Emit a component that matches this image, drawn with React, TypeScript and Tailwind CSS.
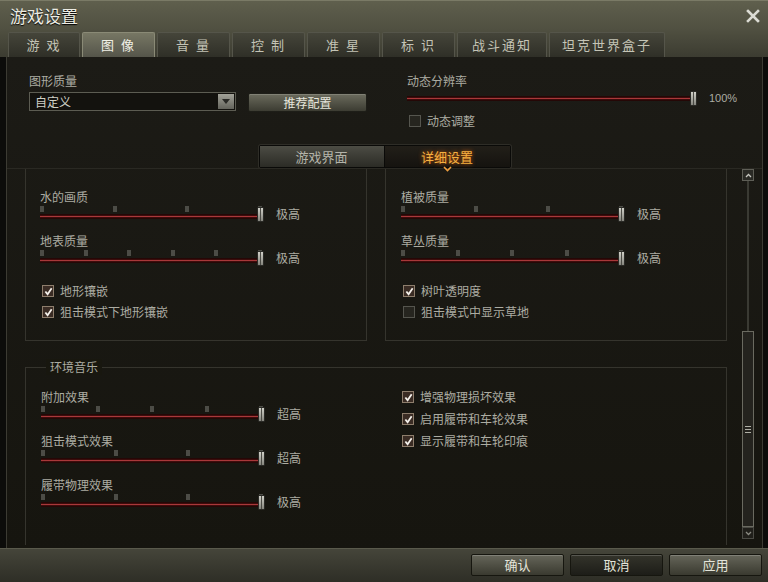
import React from 'react';

const tabs = [
  { label: '游 戏', w: 'w-[72px]' },
  { label: '图 像', w: 'w-[73px]', active: true },
  { label: '音 量', w: 'w-[73px]' },
  { label: '控 制', w: 'w-[73px]' },
  { label: '准 星', w: 'w-[73px]' },
  { label: '标 识', w: 'w-[73px]' },
  { label: '战斗通知', w: 'w-[90px]' },
  { label: '坦克世界盒子', w: 'w-[116px]' },
];

const Tab = ({ label, w, active }: { label: string; w: string; active?: boolean }) => (
  <div
    className={`${w} h-[25px] flex items-center justify-center border border-b-0 rounded-t-[2px] text-[13px] tracking-[2px] ${
      active
        ? 'bg-gradient-to-b from-[#777764] to-[#55554a] border-[#8a8a76] text-[#f0f0e6]'
        : 'bg-gradient-to-b from-[#45453a] to-[#2f2f27] border-[#55554a] text-[#c4c4b6]'
    }`}
  >
    {label}
  </div>
);

const Thumb = () => (
  <div className="absolute right-0 top-[2px] w-[7px] h-[15px] rounded-[1px] bg-gradient-to-b from-[#d0d0c8] to-[#86867e] border border-[#2a2a26] flex justify-center">
    <div className="w-[1px] h-full bg-[#4a4a44]" />
  </div>
);

const Track = () => (
  <div className="h-[5px] bg-[#3c0d0c] border-y border-[#250706] flex items-center">
    <div className="w-full h-[1px] bg-[#a8383a]" />
  </div>
);

const Slider = ({ label, ticks, value }: { label: string; ticks: number; value: string }) => (
  <div>
    <div className="h-4 text-[12px] leading-4 text-[#acaca2]">{label}</div>
    <div className="flex items-center">
      <div className="relative w-[224px] h-[18px]">
        <div className="flex justify-between pt-[1px] pr-[2px]">
          {Array.from({ length: ticks }).map((_, i) => (
            <span key={i} className="w-[4px] h-[6px] bg-[#4c4c46]" />
          ))}
        </div>
        <div className="mt-[2px] mr-[2px]">
          <Track />
        </div>
        <Thumb />
      </div>
      <span className="ml-[12px] text-[12px] text-[#acaca2]">{value}</span>
    </div>
  </div>
);

const Check = ({ label, checked }: { label: string; checked?: boolean }) => (
  <div className="h-4 flex items-center pl-[2px]">
    <span
      className={`w-[12px] h-[12px] flex items-center justify-center border ${
        checked ? 'border-[#8e7e6c] bg-[#3a2c24]' : 'border-[#55554e] bg-[#26251f]'
      }`}
    >
      {checked && (
        <svg width="9" height="9" viewBox="0 0 10 10">
          <polyline points="1.5,5 4,8 8.5,1.5" fill="none" stroke="#f4f0ea" strokeWidth="2" />
        </svg>
      )}
    </span>
    <span className="ml-[6px] text-[12px] text-[#acaca2]">{label}</span>
  </div>
);

const FooterButton = ({ label, dark }: { label: string; dark?: boolean }) => (
  <button
    className={`w-[93px] h-[22px] border border-[#16160f] rounded-[2px] text-[13px] text-[#e4e4da] shadow-[inset_0_1px_0_rgba(255,255,255,0.18)] ${
      dark ? 'bg-gradient-to-b from-[#34342b] to-[#1d1d18]' : 'bg-gradient-to-b from-[#66665a] to-[#3a3a30]'
    }`}
  >
    {label}
  </button>
);

export default function App() {
  return (
    <div className="w-[768px] h-[582px] bg-[#0c0c0a] flex flex-col overflow-hidden font-['Noto_Sans_CJK_SC','Noto_Sans',sans-serif]">
      {/* header + tabs */}
      <div className="h-[57px] bg-gradient-to-b from-[#5f5f4d] via-[#505041] to-[#3c3c31] border-t border-[#7a7a66] flex flex-col">
        <div className="h-[29px] flex items-center justify-between pl-[10px] pr-[8px]">
          <span className="text-[17px] text-[#ecece4] [text-shadow:0_1px_1px_#000]">游戏设置</span>
          <svg width="14" height="14" viewBox="0 0 14 14">
            <path d="M2 2 L12 12 M12 2 L2 12" stroke="#dcdcd4" strokeWidth="2.6" strokeLinecap="square" />
          </svg>
        </div>
        <div className="flex items-end gap-[2px] pl-[8px] h-[27px]">
          {tabs.map((t) => (
            <Tab key={t.label} {...t} />
          ))}
        </div>
      </div>

      {/* content */}
      <div className="ml-[6px] mr-[5px] h-[491px] bg-gradient-to-b from-[#1c1b16] to-[#16150f] border-x border-[#3c3b33] flex flex-col">
        {/* top settings */}
        <div className="h-[88px] flex pl-[22px] pt-[16px]">
          <div className="w-[378px]">
            <div className="h-4 text-[12px] leading-4 text-[#acaca2]">图形质量</div>
            <div className="flex items-center mt-[2px]">
              <div className="w-[207px] h-[19px] flex items-center justify-between border border-[#5c5c52] bg-[#13120e]">
                <span className="pl-[5px] text-[12px] text-[#d0d0c6]">自定义</span>
                <span className="w-[16px] h-[15px] mr-[1px] flex items-center justify-center bg-gradient-to-b from-[#a2a298] to-[#64645c]">
                  <svg width="8" height="5" viewBox="0 0 8 5">
                    <polygon points="0,0 8,0 4,5" fill="#2a2a26" />
                  </svg>
                </span>
              </div>
              <button className="ml-[12px] mt-[2px] w-[119px] h-[19px] border border-[#1e1e18] rounded-[2px] bg-gradient-to-b from-[#6c6c5e] to-[#3c3c32] text-[12px] font-normal text-[#e6e6dc] shadow-[inset_0_1px_0_rgba(255,255,255,0.15)]">
                推荐配置
              </button>
            </div>
          </div>
          <div>
            <div className="h-4 text-[12px] leading-4 text-[#acaca2]">动态分辨率</div>
            <div className="flex items-center">
              <div className="relative w-[290px] h-[18px]">
                <div className="pt-[7px] mr-[2px]">
                  <Track />
                </div>
                <Thumb />
              </div>
              <span className="ml-[12px] text-[11px] text-[#acaca2] font-['Liberation_Sans',sans-serif]">100%</span>
            </div>
            <div className="mt-[6px]">
              <Check label="动态调整" />
            </div>
          </div>
        </div>

        {/* view toggle */}
        <div className="h-[23px] flex justify-center">
          <div className="flex border border-[#0a0a08] rounded-[2px] shadow-[0_0_0_1px_#2e2d27]">
            <div className="w-[125px] flex items-center justify-center bg-gradient-to-b from-[#4c4c44] to-[#2c2c26] text-[13px] text-[#b4b4aa] border-r border-[#0a0a08]">
              游戏界面
            </div>
            <div className="relative w-[125px] flex items-center justify-center bg-gradient-to-b from-[#221f19] to-[#15130f] text-[13px] text-[#f5b040] [text-shadow:0_0_4px_#d9640f]">
              详细设置
              <svg className="absolute bottom-[-5px] left-[58px]" width="9" height="6" viewBox="0 0 9 6">
                <polyline points="1,1 4.5,4.5 8,1" fill="none" stroke="#f0a040" strokeWidth="1.6" />
              </svg>
            </div>
          </div>
        </div>

        {/* scroll region */}
        <div className="flex-1 flex overflow-hidden pl-[18px] pr-[9px] pb-[3px] border-t border-[#2a2923]">
          <div className="w-[702px] flex flex-col">
            <div className="flex gap-[18px]">
              <div className="w-[342px] h-[172px] border-x border-b border-[#35342d] pl-[14px] pt-[20px]">
                <Slider label="水的画质" ticks={4} value="极高" />
                <div className="mt-[10px]">
                  <Slider label="地表质量" ticks={6} value="极高" />
                </div>
                <div className="mt-[16px] flex flex-col gap-[5px]">
                  <Check label="地形镶嵌" checked />
                  <Check label="狙击模式下地形镶嵌" checked />
                </div>
              </div>
              <div className="w-[342px] h-[172px] border-x border-b border-[#35342d] pl-[15px] pt-[20px]">
                <Slider label="植被质量" ticks={4} value="极高" />
                <div className="mt-[10px]">
                  <Slider label="草丛质量" ticks={5} value="极高" />
                </div>
                <div className="mt-[16px] flex flex-col gap-[5px]">
                  <Check label="树叶透明度" checked />
                  <Check label="狙击模式中显示草地" />
                </div>
              </div>
            </div>

            <div className="relative mt-[26px] flex-1 border-x border-t border-[#35342d] flex pt-[21px]">
              <span className="absolute left-[20px] top-[-9px] px-[4px] bg-[#18170f] text-[12px] leading-4 text-[#acaca2]">
                环境音乐
              </span>
              <div className="w-[360px] pl-[15px] flex flex-col gap-[10px]">
                <Slider label="附加效果" ticks={5} value="超高" />
                <Slider label="狙击模式效果" ticks={4} value="超高" />
                <Slider label="履带物理效果" ticks={4} value="极高" />
              </div>
              <div className="flex flex-col gap-[6px] pl-[14px]">
                <Check label="增强物理损坏效果" checked />
                <Check label="启用履带和车轮效果" checked />
                <Check label="显示履带和车轮印痕" checked />
              </div>
            </div>
          </div>

          {/* scrollbar */}
          <div className="ml-[15px] w-[12px] flex flex-col items-center">
            <div className="w-[12px] h-[12px] border border-[#5e5e56] bg-[#2a2a25] flex items-center justify-center">
              <svg width="7" height="5" viewBox="0 0 7 5">
                <polyline points="1,4 3.5,1.5 6,4" fill="none" stroke="#c8c8c0" strokeWidth="1.3" />
              </svg>
            </div>
            <div className="w-[2px] h-[150px] border-x border-[#3a3a33]" />
            <div className="w-[12px] h-[196px] border border-[#6a6a60] bg-[#24231e] flex items-center justify-center">
              <div className="flex flex-col gap-[2px]">
                <span className="w-[6px] h-[1px] bg-[#b0b0a6]" />
                <span className="w-[6px] h-[1px] bg-[#b0b0a6]" />
                <span className="w-[6px] h-[1px] bg-[#b0b0a6]" />
              </div>
            </div>
            <div className="w-[12px] h-[12px] border border-[#4a4a44] bg-[#201f1a] flex items-center justify-center">
              <svg width="7" height="5" viewBox="0 0 7 5">
                <polyline points="1,1 3.5,3.5 6,1" fill="none" stroke="#8a8a82" strokeWidth="1.3" />
              </svg>
            </div>
          </div>
        </div>
      </div>

      {/* footer */}
      <div className="flex-1 bg-gradient-to-b from-[#45453a] to-[#2e2e26] border-t border-[#5a5a4c] flex items-center justify-end gap-[6px] pr-[6px] pb-[1px]">
        <FooterButton label="确认" />
        <FooterButton label="取消" dark />
        <FooterButton label="应用" />
      </div>
    </div>
  );
}
